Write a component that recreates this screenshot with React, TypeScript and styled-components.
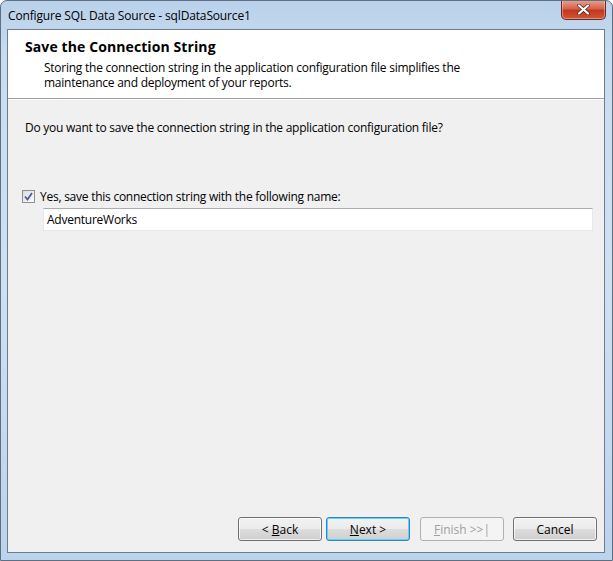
import React from "react";
import styled, { createGlobalStyle } from "styled-components";

const Global = createGlobalStyle`
  html, body { margin: 0; padding: 0; background: #fff; }
  body { font-family: "Open Sans", "Noto Sans", sans-serif; }
`;

const Window = styled.div`
  width: 613px;
  height: 561px;
  box-sizing: border-box;
  display: flex;
  flex-direction: column;
  background: linear-gradient(180deg, #b9d1ea 0%, #c8dcf1 10%, #cfe0f3 50%, #bcd3ec 100%);
  border: 1px solid #5f6f80;
  border-radius: 7px 7px 0 0;
  overflow: hidden;
`;

const TitleBar = styled.div`
  height: 28px;
  display: flex;
  align-items: flex-start;
  justify-content: space-between;
  padding: 0 6px 0 7px;
`;

const Caption = styled.span`
  margin-top: 6px;
  font-size: 12px;
  color: #000;
  letter-spacing: -0.15px;
`;

const CloseButton = styled.div`
  width: 43px;
  height: 19px;
  margin-top: -1px;
  display: flex;
  align-items: center;
  justify-content: center;
  border: 1px solid #6b2a20;
  border-top: none;
  border-radius: 0 0 5px 5px;
  background: linear-gradient(180deg, #e8a493 0%, #d7634b 45%, #c2391f 55%, #d1563a 100%);
  box-shadow: inset 0 0 0 1px rgba(255, 255, 255, 0.35);
`;

const Client = styled.div`
  flex: 1;
  margin: 0 7px 7px 6px;
  display: flex;
  flex-direction: column;
  background: #f0f0f0;
  border: 1px solid #6d7d8f;
`;

const Header = styled.div`
  height: 69px;
  background: #fff;
  border-bottom: 1px solid #a0a0a0;
  box-shadow: 0 1px 0 #fff;
  padding: 7px 0 0 17px;
  box-sizing: border-box;
`;

const HeaderTitle = styled.div`
  font-weight: 700;
  font-size: 14px;
  color: #000;
  line-height: 20px;
  letter-spacing: 0.1px;
`;

const HeaderText = styled.div`
  margin: 3px 0 0 19px;
  font-size: 12px;
  line-height: 15px;
  color: #000;
  width: 440px;
  letter-spacing: -0.25px;
`;

const Body = styled.div`
  flex: 1;
  padding: 21px 11px 0 17px;
  font-size: 12px;
  letter-spacing: -0.25px;
`;

const Question = styled.div`
  line-height: 16px;
`;

const CheckRow = styled.label`
  margin-top: 52px;
  display: flex;
  align-items: center;
  gap: 5px;
  margin-left: -3px;
`;

const Check = styled.span`
  width: 11px;
  height: 11px;
  border: 1px solid #8e8f8f;
  background: linear-gradient(135deg, #dcdcdc, #fbfbfb);
  display: flex;
  align-items: center;
  justify-content: center;
`;

const NameInput = styled.div`
  margin: 3px 0 0 18px;
  height: 23px;
  box-sizing: border-box;
  background: #fff;
  border: 1px solid #e3e9ef;
  border-top-color: #abadb3;
  padding: 2px 0 0 3px;
  font-size: 12px;
`;

const Footer = styled.div`
  display: flex;
  justify-content: flex-end;
  padding: 0 7px 11px 0;
`;

const Button = styled.div<{ $focus?: boolean; $disabled?: boolean; $gap?: number }>`
  width: 84px;
  height: 24px;
  box-sizing: border-box;
  margin-left: ${(p) => p.$gap ?? 0}px;
  display: flex;
  align-items: center;
  justify-content: center;
  font-size: 12px;
  border-radius: 3px;
  color: ${(p) => (p.$disabled ? "#a0a0a0" : "#000")};
  border: 1px solid ${(p) => (p.$focus ? "#3c7fb1" : p.$disabled ? "#adb2b5" : "#707070")};
  background: ${(p) =>
    p.$disabled
      ? "#f4f4f4"
      : "linear-gradient(180deg, #f2f2f2 0%, #ebebeb 50%, #dddddd 51%, #cfcfcf 100%)"};
  box-shadow: inset 0 0 0 1px
    ${(p) => (p.$disabled ? "#f4f4f4" : p.$focus ? "#5fd2ff" : "rgba(255,255,255,0.7)")};
  u { text-decoration: underline; }
`;

export default function App() {
  return (
    <>
      <Global />
      <Window>
        <TitleBar>
          <Caption>Configure SQL Data Source - sqlDataSource1</Caption>
          <CloseButton>
            <svg width="13" height="11" viewBox="0 0 13 11">
              <path
                d="M2 1.5 L11 9.5 M11 1.5 L2 9.5"
                stroke="#4a2a24"
                strokeWidth="3.6"
                strokeLinecap="round"
              />
              <path
                d="M2 1.5 L11 9.5 M11 1.5 L2 9.5"
                stroke="#fff"
                strokeWidth="2.2"
                strokeLinecap="round"
              />
            </svg>
          </CloseButton>
        </TitleBar>
        <Client>
          <Header>
            <HeaderTitle>Save the Connection String</HeaderTitle>
            <HeaderText>
              Storing the connection string in the application configuration file simplifies the
              maintenance and deployment of your reports.
            </HeaderText>
          </Header>
          <Body>
            <Question>
              Do you want to save the connection string in the application configuration file?
            </Question>
            <CheckRow>
              <Check>
                <svg width="9" height="9" viewBox="0 0 9 9">
                  <path d="M1 4.5 L3.5 7.5 L8 1" fill="none" stroke="#4a5f97" strokeWidth="1.8" />
                </svg>
              </Check>
              Yes, save this connection string with the following name:
            </CheckRow>
            <NameInput>AdventureWorks</NameInput>
          </Body>
          <Footer>
            <Button>
              &lt;&nbsp;<u>B</u>ack
            </Button>
            <Button $focus $gap={4}>
              <u>N</u>ext &gt;
            </Button>
            <Button $disabled $gap={10}>
              <u>F</u>inish &gt;&gt;|
            </Button>
            <Button $gap={9}>Cancel</Button>
          </Footer>
        </Client>
      </Window>
    </>
  );
}
